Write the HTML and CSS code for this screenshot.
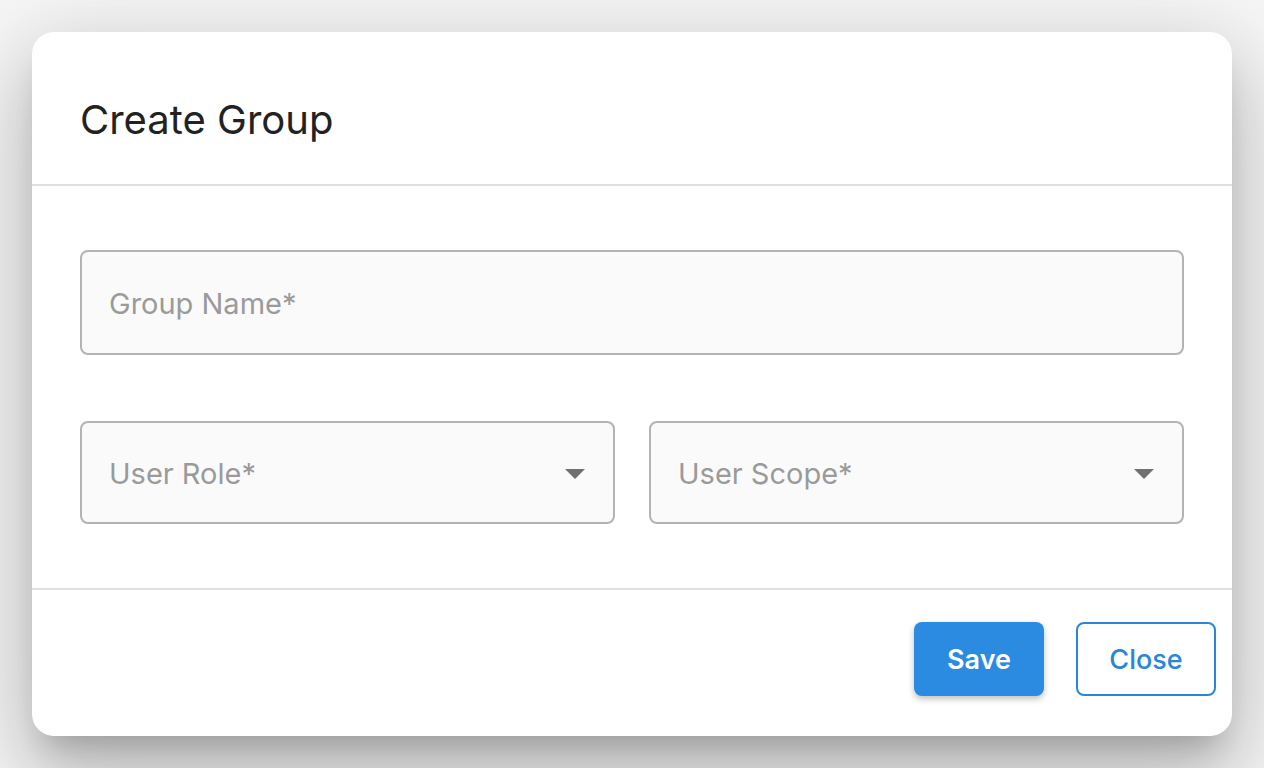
FILE: index.html
```html
<!DOCTYPE html>
<html lang="en">

<head>
    <meta charset="UTF-8">
    <meta name="viewport" content="width=device-width, initial-scale=1.0">
    <title>Create Group</title>
    <link rel="stylesheet" href="styles.css">
</head>

<body>
    <div class="dialog">
        <div class="dialog-header">
            <h2 class="title">Create Group</h2>
        </div>

        <div class="dialog-body">
            <div class="field">
                <input type="text" placeholder="Group Name*">
            </div>
            <div class="row">
                <div class="field select">
                    <span class="placeholder">User Role*</span>
                    <span class="caret"></span>
                </div>
                <div class="field select">
                    <span class="placeholder">User Scope*</span>
                    <span class="caret"></span>
                </div>
            </div>
        </div>

        <div class="dialog-footer">
            <button class="btn save">Save</button>
            <button class="btn close">Close</button>
        </div>
    </div>
</body>

</html>
```
FILE: styles.css
```css
* {
    margin: 0;
    padding: 0;
    box-sizing: border-box;
    font-family: Inter, "Noto Sans", sans-serif;
}

html,
body {
    height: 100%;
}

body {
    background-color: #f6f6f6;
    padding: 32px;
    overflow: hidden;
}

.dialog {
    width: 1200px;
    height: 704px;
    background-color: #fff;
    border-radius: 22px;
    display: flex;
    flex-direction: column;
    box-shadow: 0 22px 30px -14px rgba(0, 0, 0, 0.2),
        0 48px 76px 6px rgba(0, 0, 0, 0.14),
        0 18px 92px 16px rgba(0, 0, 0, 0.12);
}

.dialog-header {
    height: 154px;
    padding: 0 48px;
    display: flex;
    align-items: center;
    padding-top: 22px;
    border-bottom: 2px solid #e0e0e0;
}

.title {
    font-size: 40px;
    font-weight: 400;
    color: #222;
}

.dialog-body {
    flex: 1;
    padding: 64px 48px;
    display: flex;
    flex-direction: column;
    gap: 66px;
}

.row {
    display: flex;
    gap: 34px;
}

.field {
    height: 105px;
    width: 100%;
    background-color: #fafafa;
    border: 2px solid #b3b3b3;
    border-radius: 8px;
}

.field input {
    width: 100%;
    height: 100%;
    border: none;
    outline: none;
    background: transparent;
    padding-left: 27px;
    padding-top: 2px;
    font-size: 29px;
    color: #333;
}

.field input::placeholder,
.placeholder {
    color: #9a9a9a;
}

.select {
    height: 103px;
    flex: 1;
    display: flex;
    align-items: center;
    justify-content: space-between;
    padding: 2px 28px 0 27px;
    font-size: 29px;
}

.caret {
    width: 0;
    height: 0;
    border-left: 10px solid transparent;
    border-right: 10px solid transparent;
    border-top: 10px solid #707070;
}

.dialog-footer {
    height: 148px;
    border-top: 2px solid #e0e0e0;
    display: flex;
    justify-content: flex-end;
    align-items: flex-start;
    gap: 32px;
    padding: 32px 16px 0 0;
}

.btn {
    height: 74px;
    border-radius: 8px;
    font-size: 27px;
    font-weight: 600;
    cursor: pointer;
}

.save {
    width: 130px;
    background-color: #2a8be0;
    color: #fff;
    border: none;
    box-shadow: 0 3px 6px rgba(0, 0, 0, 0.25);
}

.close {
    width: 140px;
    background-color: #fff;
    color: #2a86d8;
    border: 2px solid #2a86d8;
    font-weight: 500;
}
```
